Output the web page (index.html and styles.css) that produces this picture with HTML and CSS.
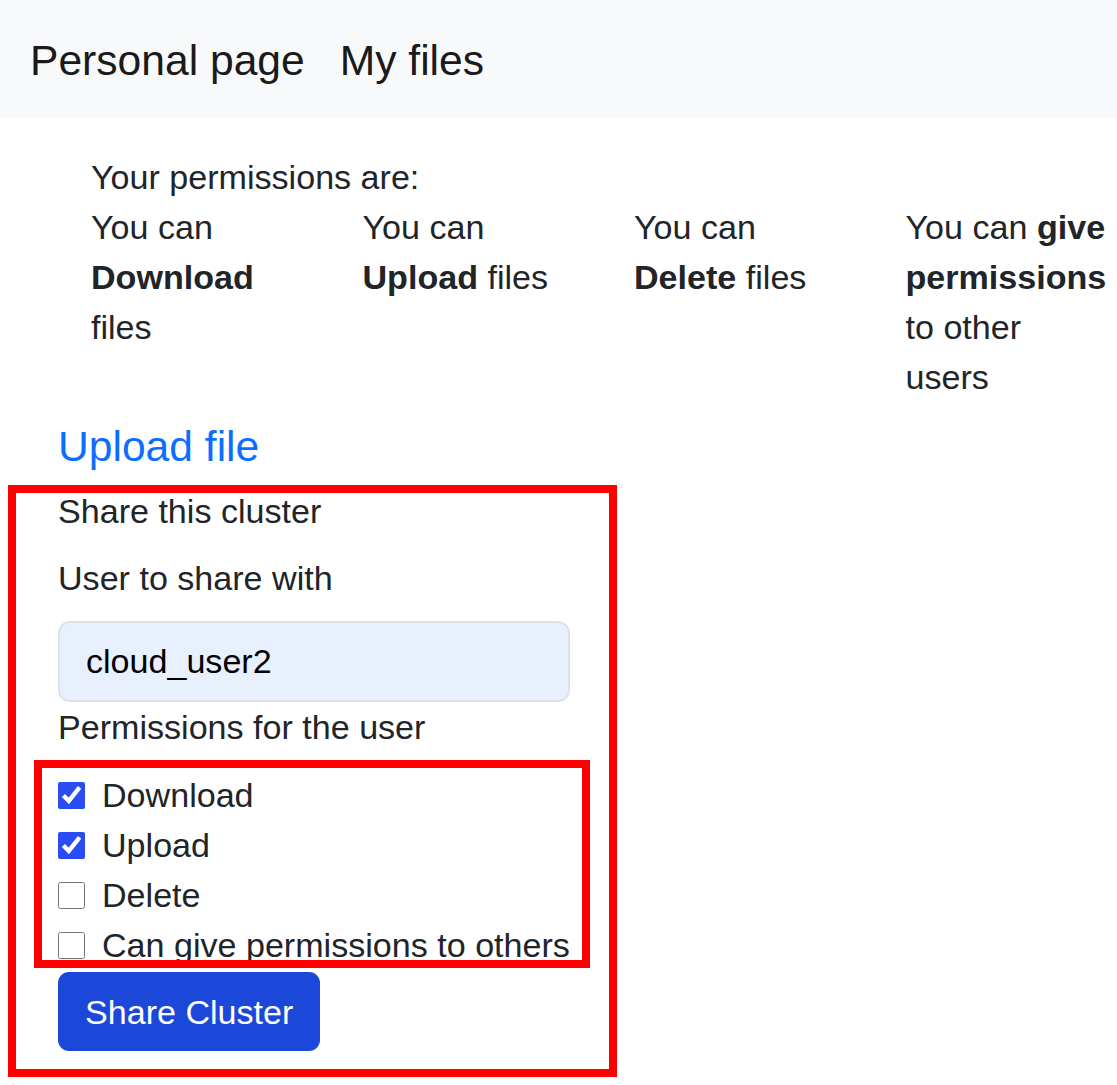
FILE: index.html
```html
<!DOCTYPE html>
<html lang="en">
<head>
<meta charset="utf-8">
<title>My files</title>
<link rel="stylesheet" href="styles.css">
</head>
<body>
<nav class="navbar">
  <a class="nav-link" href="#">Personal page</a>
  <a class="nav-link" href="#">My files</a>
</nav>
<main class="main">
  <section class="perms">
    <div class="perms-title">Your permissions are:</div>
    <div class="perms-grid">
      <div class="perm">You can <b>Download</b> files</div>
      <div class="perm">You can <b>Upload</b> files</div>
      <div class="perm">You can <b>Delete</b> files</div>
      <div class="perm">You can <b>give permissions</b> to other users</div>
    </div>
  </section>
  <a class="upload-link" href="#">Upload file</a>
  <form class="share-form annot annot-outer">
    <div class="form-title">Share this cluster</div>
    <label class="form-label" for="user">User to share with</label>
    <input class="text-input" id="user" type="text" value="cloud_user2">
    <div class="form-label-tight">Permissions for the user</div>
    <div class="checks annot annot-inner">
      <label class="check"><input type="checkbox" checked><span>Download</span></label>
      <label class="check"><input type="checkbox" checked><span>Upload</span></label>
      <label class="check"><input type="checkbox"><span>Delete</span></label>
      <label class="check"><input type="checkbox"><span>Can give permissions to others</span></label>
    </div>
    <button class="btn" type="button">Share Cluster</button>
  </form>
</main>
</body>
</html>
```
FILE: styles.css
```css
* { box-sizing: border-box; }
html, body { margin: 0; padding: 0; }
body {
  font-family: "Liberation Sans", Arial, sans-serif;
  font-size: 34.1px;
  line-height: 50px;
  color: #212529;
  background: #fff;
}
.navbar {
  height: 118px;
  background: #f8f9fa;
  display: flex;
  align-items: center;
  gap: 35px;
  padding-left: 30px;
  padding-top: 1px;
}
.nav-link {
  font-size: 42.6px;
  line-height: 50px;
  color: #1a1a1a;
  text-decoration: none;
}
.main {
  padding-left: 58px;
  padding-top: 34px;
  padding-bottom: 40px;
}
.perms { margin-left: 33px; }
.perms-grid {
  display: grid;
  grid-template-columns: repeat(4, 205px);
  column-gap: 66.5px;
}
.perm b { font-weight: 700; }
.upload-link {
  display: block;
  margin-top: 19px;
  font-size: 42.6px;
  line-height: 50px;
  color: #0d6efd;
  text-decoration: none;
  width: max-content;
}
.share-form {
  margin-top: 15px;
  width: 512px;
}
.form-title { margin-bottom: 17px; }
.form-label { display: block; margin-bottom: 18px; }
.text-input {
  display: block;
  width: 512px;
  height: 81px;
  padding: 0 26px;
  font-family: "Liberation Sans", Arial, sans-serif;
  font-size: 34.1px;
  color: #000;
  background: #e8f0fe;
  border: 2px solid #dde2ea;
  border-radius: 12px;
  outline: none;
}
.form-label-tight { margin-bottom: 18px; }
.checks { display: flex; flex-direction: column; }
.check {
  display: flex;
  align-items: center;
  gap: 17px;
  height: 50px;
}
.check input {
  margin: 0;
  width: 27px;
  height: 27px;
  accent-color: #2b4cf2;
  flex: none;
}
.btn {
  display: block;
  margin-top: 2px;
  height: 79px;
  padding: 0 27px;
  border: none;
  border-radius: 11px;
  background: #1c48d9;
  color: #fff;
  font-family: "Liberation Sans", Arial, sans-serif;
  font-size: 34.1px;
  line-height: 50px;
}
.annot { position: relative; }
.annot::after {
  content: "";
  position: absolute;
  border: 8px solid #ff0000;
  pointer-events: none;
}
.annot-outer::after { left: -50px; right: -47px; top: -1px; bottom: -26px; }
.annot-inner::after { left: -24px; right: -20px; top: -10px; bottom: 2px; }
```
